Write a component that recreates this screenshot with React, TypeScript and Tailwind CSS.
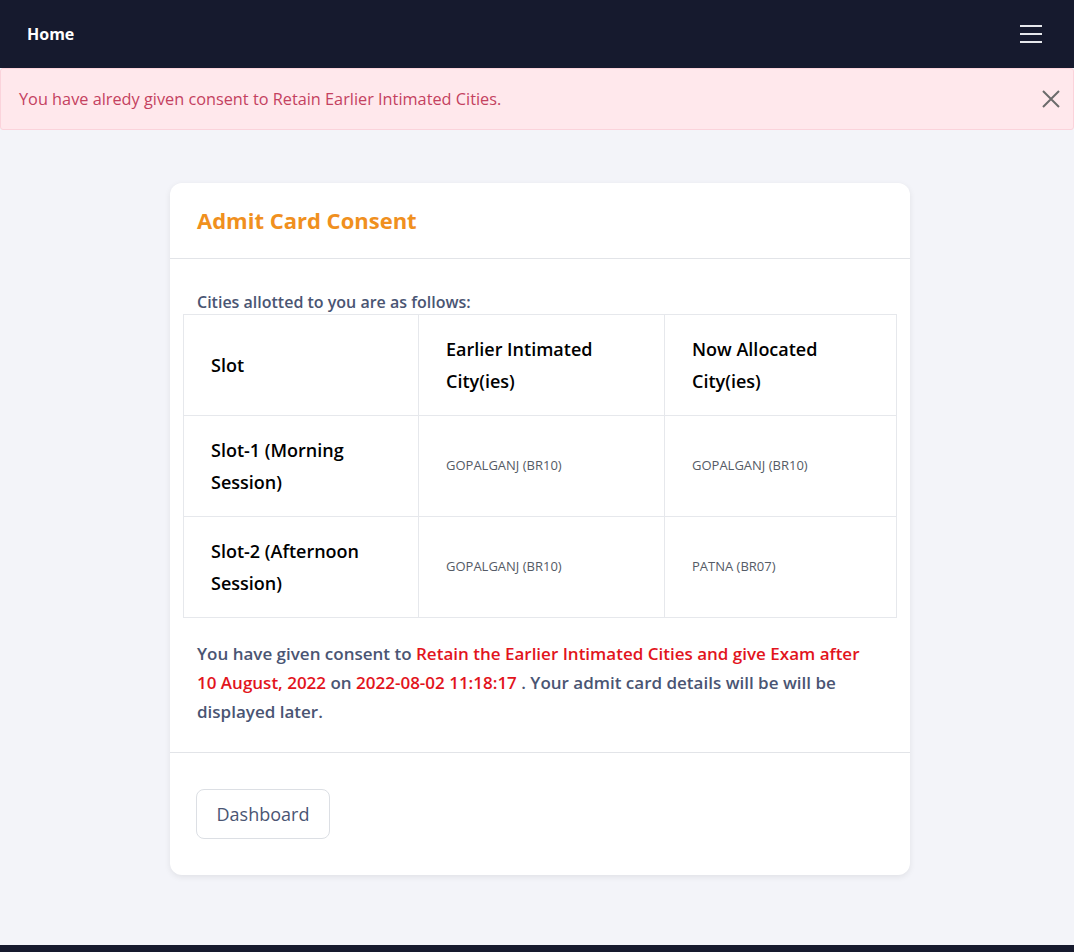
import React from "react";

const rows = [
  { slot: "Slot-1 (Morning Session)", earlier: "GOPALGANJ (BR10)", now: "GOPALGANJ (BR10)" },
  { slot: "Slot-2 (Afternoon Session)", earlier: "GOPALGANJ (BR10)", now: "PATNA (BR07)" },
];

function MenuIcon() {
  return (
    <svg width="24" height="20" viewBox="0 0 24 20" fill="none" stroke="#e5e7eb" strokeWidth="2">
      <path d="M1 2h22M1 10h22M1 18h22" />
    </svg>
  );
}

function CloseIcon() {
  return (
    <svg width="20" height="20" viewBox="0 0 20 20" fill="none" stroke="#6b6b6b" strokeWidth="2">
      <path d="M2 2l16 16M18 2L2 18" />
    </svg>
  );
}

const cell = "border border-[#e6e8ec] pl-[27px] pr-4 text-left";

export default function App() {
  return (
    <div
      className="min-h-[952px] flex flex-col bg-[#f3f4f9]"
      style={{ fontFamily: "'Open Sans', 'Noto Sans', sans-serif" }}
    >
      <nav className="h-[68px] bg-[#161a2e] flex items-center justify-between px-[27px] pr-[31px]">
        <span className="text-white font-bold text-[16px]">Home</span>
        <MenuIcon />
      </nav>

      <div className="h-[62px] bg-[#ffe8ec] border border-[#fbd3db] rounded-[3px] flex items-center justify-between pl-[18px] pr-[12px]">
        <span className="text-[16.3px] text-[#c4415f]">
          You have alredy given consent to Retain Earlier Intimated Cities.
        </span>
        <CloseIcon />
      </div>

      <main className="flex-1 flex justify-center pl-[6px] pt-[53px] pb-[70px]">
        <div className="w-[740px] bg-white rounded-[12px] shadow-[0_2px_6px_rgba(0,0,0,0.08)] self-start">
          <div className="h-[76px] border-b border-[#e2e4e8] flex items-center px-[27px]">
            <h1 className="text-[22px] font-bold text-[#f0901e]">Admit Card Consent</h1>
          </div>

          <div className="px-[13px] pt-[31px] pb-[26px] border-b border-[#e2e4e8]">
            <p className="px-[14px] text-[16px] font-semibold text-[#4a5573] leading-[24px]">
              Cities allotted to you are as follows:
            </p>
            <table className="w-full border-collapse">
              <thead>
                <tr className="h-[101px]">
                  <th className={`${cell} w-[235px] text-[18px] font-semibold text-black leading-[32px]`}>
                    Slot
                  </th>
                  <th className={`${cell} w-[246px] text-[18px] font-semibold text-black leading-[32px]`}>
                    Earlier Intimated City(ies)
                  </th>
                  <th className={`${cell} text-[18px] font-semibold text-black leading-[32px]`}>
                    Now Allocated City(ies)
                  </th>
                </tr>
              </thead>
              <tbody>
                {rows.map((r) => (
                  <tr key={r.slot} className="h-[101px]">
                    <td className={`${cell} text-[18px] font-semibold text-black leading-[32px]`}>
                      {r.slot}
                    </td>
                    <td className={`${cell} text-[13px] text-[#555b66]`}>{r.earlier}</td>
                    <td className={`${cell} text-[13px] text-[#555b66]`}>{r.now}</td>
                  </tr>
                ))}
              </tbody>
            </table>
            <p className="px-[14px] mt-[21px] text-[17px] font-semibold text-[#4a5573] leading-[29px]">
              You have given consent to{" "}
              <span className="text-[#e2141c]">
                Retain the Earlier Intimated Cities and give Exam after 10 August, 2022
              </span>{" "}
              on <span className="text-[#e2141c]">2022-08-02 11:18:17</span> . Your admit card
              details will be will be displayed later.
            </p>
          </div>

          <div className="px-[26px] pt-[36px] pb-[36px]">
            <button className="h-[50px] w-[134px] border border-[#dcdfe4] rounded-[8px] text-[18px] font-medium text-[#4a5573]">
              Dashboard
            </button>
          </div>
        </div>
      </main>

      <footer className="h-[7px] bg-[#161a2e]" />
    </div>
  );
}
